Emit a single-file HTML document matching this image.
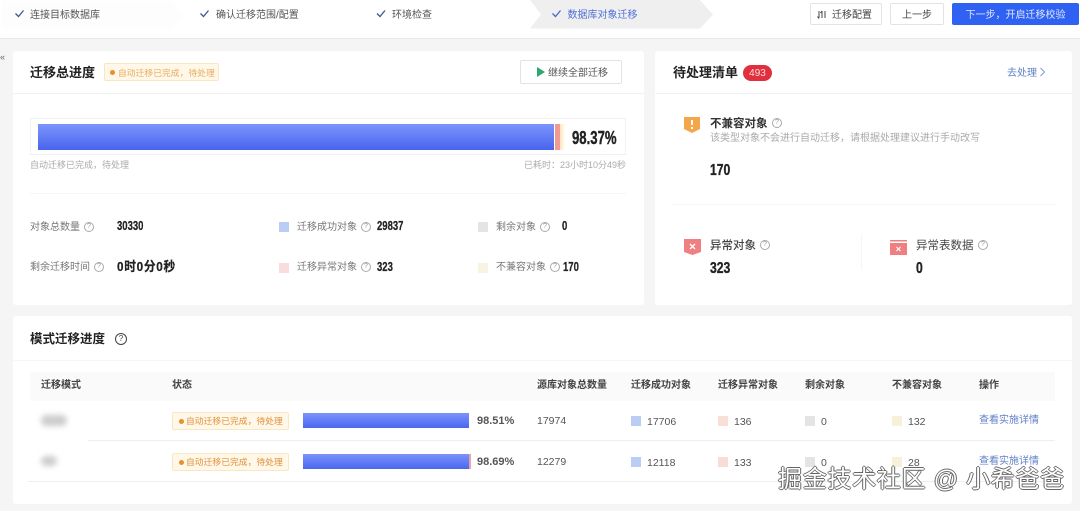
<!DOCTYPE html>
<html><head><meta charset="utf-8">
<style>
html,body{margin:0;padding:0}
body{width:1080px;height:511px;position:relative;overflow:hidden;background:#f5f5f5;font-family:"Liberation Sans","Noto Sans CJK SC",sans-serif;color:#333}
.a{position:absolute;white-space:nowrap}
.t{font-size:10px;line-height:14px;filter:blur(.3px);margin-top:1px}
.g{color:#777}
.n{font-family:"Liberation Sans Narrow","Liberation Sans","Noto Sans CJK SC",sans-serif;font-weight:700;color:#222;transform-origin:0 50%;transform:scaleX(.76);-webkit-text-stroke:.25px #222}
.card{position:absolute;background:#fff;border-radius:3px}
.h{font-weight:700;font-size:13px;line-height:18px;color:#222}
.sq{position:absolute;width:10px;height:10px}
.tag{position:absolute;left:172px;width:115px;height:16px;background:#fff7e8;border:1px solid #fbe6c4;border-radius:2px;color:#e0913a;font-size:8.800px;line-height:17px;white-space:nowrap;text-indent:13px;filter:blur(.25px)}
.tag:before{content:"";position:absolute;left:6px;top:5.500px;width:5px;height:5px;border-radius:50%;background:#e8902c}
.bar{position:absolute;left:303px;width:166px;height:15px;background:linear-gradient(#7b93fb,#4a66ee)}
.q{position:absolute;width:8px;height:8px;border:1px solid #aaa;border-radius:50%;color:#999;font-size:7px;line-height:8px;text-align:center;text-indent:0}
.btn{position:absolute;top:3px;height:22px;box-sizing:border-box;border:1px solid #e3e3e3;border-radius:2px;background:#fff;font-size:10px;line-height:23px;text-align:center;color:#444}
.ln{position:absolute;height:1px;background:#f1f1f1}
.th{font-size:10px;font-weight:700;color:#444;line-height:14px;margin-top:1px;filter:blur(.2px)}
.td{font-size:10.500px;color:#555;line-height:14px;margin-top:1px;filter:blur(.2px)}
.pc{font-size:11px;font-weight:700;line-height:14px;color:#555;margin-top:1px;filter:blur(.2px)}
</style></head><body>

<div class="a" style="left:0;top:0;width:1080px;height:38px;background:#fff;border-bottom:1px solid #e8e8e8"></div>
<svg class="a" style="left:0;top:0" width="720" height="30" viewBox="0 0 720 30">
<path d="M2 1H172L184 14.500 172 28H2Z" fill="#fdfdfd"/>
<path d="M530 0H700L713 14.500 700 28.500H530L541 14.500Z" fill="#efefef"/>
<g fill="none" stroke="#3f5596" stroke-width="1.300">
<path d="M15.500 13.500l3 3 5-6"/><path d="M200.500 13.500l3 3 5-6"/><path d="M377 13.500l3 3 5-6"/></g>
<path d="M552.500 13.500l3 3 5-6" fill="none" stroke="#4a68c8" stroke-width="1.300"/>
</svg>
<div class="a t" style="left:30px;top:8px;color:#555">连接目标数据库</div>
<div class="a t" style="left:216px;top:8px;color:#555">确认迁移范围/配置</div>
<div class="a t" style="left:392px;top:8px;color:#555">环境检查</div>
<div class="a t" style="left:567.500px;top:8px;color:#4f70d8">数据库对象迁移</div>

<div class="btn" style="left:810px;width:72px;text-indent:12px;filter:blur(.25px)">迁移配置</div>
<svg class="a" style="left:809px;top:9px" width="22" height="12"><path d="M10 2v7M8.500 7.500l1.500 2M13 2v7M13 2l-1.500 2M16 2v7" stroke="#555" stroke-width="1.100" fill="none"/></svg>
<div class="btn" style="left:890px;width:54px;filter:blur(.25px)">上一步</div>
<div class="btn" style="left:952px;width:127px;border:0;line-height:25px;background:#2f62f2;color:#dfe7ff;filter:blur(.25px)">下一步，开启迁移校验</div>

<div class="a" style="left:0;top:52px;font-size:9px;line-height:10px;color:#666">«</div>

<div class="card" style="left:13px;top:51px;width:631px;height:254px"></div>
<div class="card" style="left:655px;top:51px;width:417px;height:254px"></div>
<div class="card" style="left:13px;top:316px;width:1059px;height:188px"></div>

<div class="a h" style="left:30px;top:64px">迁移总进度</div>
<div class="a" style="left:104px;top:63px;width:115px;height:18px;box-sizing:border-box;background:#fff7e8;border:1px solid #fbe6c4;border-radius:2px;color:#e5ae62;font-size:8.800px;line-height:18px;text-indent:13px;filter:blur(.25px)">自动迁移已完成，待处理<i style="position:absolute;left:5px;top:6px;width:5px;height:5px;border-radius:50%;background:#e8902c"></i></div>
<div class="a" style="left:520px;top:60px;width:102px;height:24px;box-sizing:border-box;border:1px solid #e3e3e3;border-radius:2px;background:#fff;font-size:10px;line-height:25px;color:#555;text-indent:27px;filter:blur(.25px)">继续全部迁移</div>
<svg class="a" style="left:536px;top:67px" width="10" height="10"><path d="M1 0L9 5 1 10Z" fill="#2fa66d"/></svg>
<div class="ln" style="left:13px;top:93px;width:631px"></div>

<div class="a" style="left:30px;top:118px;width:596px;height:37px;box-sizing:border-box;border:1px solid #f1f1f1"></div>
<div class="a" style="left:37.500px;top:123.500px;width:516px;height:26px;background:linear-gradient(#7d95fb,#4864ee)"></div>
<div class="a" style="left:555px;top:123.500px;width:5px;height:26px;background:#f09a94"></div>
<div class="a" style="left:560px;top:123.500px;width:5px;height:26px;background:linear-gradient(90deg,#fde5b8,#fff)"></div>
<div class="a n" style="left:572px;top:128px;font-size:18px;line-height:20px;transform:scaleX(.73);-webkit-text-stroke:.4px #222">98.37%</div>
<div class="a t" style="left:30px;top:157px;font-size:9px;color:#aaa">自动迁移已完成，待处理</div>
<div class="a t" style="right:454px;top:157px;font-size:9px;color:#aaa">已耗时：23小时10分49秒</div>
<div class="ln" style="left:30px;top:193px;width:596px;background:#f5f5f5"></div>

<div class="a t g" style="left:30px;top:220px">对象总数量</div><div class="q" style="left:84px;top:222px">?</div>
<div class="a n" style="left:117px;top:219px;font-size:12.500px;line-height:15px">30330</div>
<div class="a t g" style="left:30px;top:260px">剩余迁移时间</div><div class="q" style="left:94px;top:262px">?</div>
<div class="a n" style="left:117px;top:258px;font-size:13px;line-height:17px;letter-spacing:.8px;transform:scaleX(.9)">0时0分0秒</div>

<div class="sq" style="left:278.500px;top:222px;background:#b9cdf5"></div>
<div class="a t g" style="left:297px;top:220px">迁移成功对象</div><div class="q" style="left:361px;top:222px">?</div>
<div class="a n" style="left:377px;top:219px;font-size:12.500px;line-height:15px">29837</div>
<div class="sq" style="left:278.500px;top:263px;background:#f9dcdc"></div>
<div class="a t g" style="left:297px;top:260px">迁移异常对象</div><div class="q" style="left:361px;top:262px">?</div>
<div class="a n" style="left:377px;top:260px;font-size:12.500px;line-height:15px">323</div>

<div class="sq" style="left:478px;top:222px;background:#e4e4e4"></div>
<div class="a t g" style="left:496px;top:220px">剩余对象</div><div class="q" style="left:540px;top:222px">?</div>
<div class="a n" style="left:562px;top:219px;font-size:12.500px;line-height:15px">0</div>
<div class="sq" style="left:478px;top:263px;background:#f8f4e4"></div>
<div class="a t g" style="left:496px;top:260px">不兼容对象</div><div class="q" style="left:550px;top:262px">?</div>
<div class="a n" style="left:563px;top:260px;font-size:12.500px;line-height:15px">170</div>

<div class="a h" style="left:673px;top:64px">待处理清单</div>
<div class="a" style="left:743px;top:65px;width:29px;height:16px;border-radius:8px;background:#e0303f;color:#ffd9dc;font-size:10px;line-height:17px;text-align:center">493</div>
<div class="a t" style="left:1007px;top:66px;color:#5f7fc0">去处理</div>
<svg class="a" style="left:1039px;top:67px" width="7" height="10"><path d="M1.500 1l4 4-4 4" fill="none" stroke="#7f99cc"/></svg>
<div class="ln" style="left:655px;top:93px;width:417px"></div>

<svg class="a" style="left:684px;top:116px" width="17" height="18"><path d="M0 1H16V13L8 17 0 13Z" fill="#f3a64a"/><path d="M8 4v5M8 11v2" stroke="#fff" stroke-width="2"/></svg>
<div class="a" style="left:710px;top:116px;font-size:11.500px;font-weight:700;line-height:16px;color:#333">不兼容对象</div><div class="q" style="left:772px;top:118px">?</div>
<div class="a t" style="left:710px;top:131px;color:#aaa">该类型对象不会进行自动迁移，请根据处理建议进行手动改写</div>
<div class="a n" style="left:710px;top:161px;font-size:16px;line-height:20px;-webkit-text-stroke:.35px #222">170</div>
<div class="ln" style="left:673px;top:204px;width:382px;background:#f7f7f7"></div>

<svg class="a" style="left:684px;top:239px" width="17" height="17"><path d="M0 0H17V13L8.500 16 0 13Z" fill="#f07f82"/><path d="M6 5l5 5M11 5l-5 5" stroke="#fff" stroke-width="1.300"/></svg>
<div class="a" style="left:710px;top:238px;font-size:11.500px;line-height:16px;color:#444;font-weight:500">异常对象</div><div class="q" style="left:760px;top:240px">?</div>
<div class="a n" style="left:710px;top:259px;font-size:16px;line-height:20px;-webkit-text-stroke:.35px #222">323</div>
<div class="a" style="left:861px;top:234px;width:1px;height:36px;background:#f6f6f6"></div>
<svg class="a" style="left:890px;top:240px" width="17" height="15"><path d="M0 0H17V1.500H0Z" fill="#f07f82"/><path d="M0 3H17V15H0Z" fill="#f07f82"/><path d="M6.500 7l4 4M10.500 7l-4 4" stroke="#fff" stroke-width="1.200"/></svg>
<div class="a" style="left:916px;top:238px;font-size:11.500px;line-height:16px;color:#444">异常表数据</div><div class="q" style="left:978px;top:240px">?</div>
<div class="a n" style="left:916px;top:259px;font-size:16px;line-height:20px;-webkit-text-stroke:.35px #222">0</div>

<div class="a h" style="left:30px;top:330px;font-size:12.500px">模式迁移进度</div>
<div class="a" style="left:115px;top:333px;width:10px;height:10px;border:1px solid #444;border-radius:50%;font-size:8px;line-height:10px;text-align:center;color:#444">?</div>
<div class="ln" style="left:13px;top:360px;width:1059px;background:#f6f6f6"></div>

<div class="a" style="left:30px;top:372px;width:1025px;height:29px;background:#fafafa"></div>
<div class="a th" style="left:41px;top:378px">迁移模式</div>
<div class="a th" style="left:172px;top:378px">状态</div>
<div class="a th" style="left:537px;top:378px">源库对象总数量</div>
<div class="a th" style="left:631px;top:378px">迁移成功对象</div>
<div class="a th" style="left:718px;top:378px">迁移异常对象</div>
<div class="a th" style="left:805px;top:378px">剩余对象</div>
<div class="a th" style="left:892px;top:378px">不兼容对象</div>
<div class="a th" style="left:979px;top:378px">操作</div>

<div class="a" style="left:41px;top:415px;width:26px;height:11px;background:#ccc;border-radius:5px;filter:blur(3px)"></div>
<div class="a" style="left:41px;top:456px;width:16px;height:10px;background:#ccc;border-radius:5px;filter:blur(3px)"></div>

<div class="tag" style="top:412px">自动迁移已完成，待处理</div>
<div class="bar" style="top:412.500px"></div>
<div class="a pc" style="left:477px;top:413px">98.51%</div>
<div class="td a" style="left:537px;top:412.500px">17974</div>
<div class="sq" style="left:631px;top:416px;background:#b9cdf5"></div><div class="td a" style="left:647px;top:414px">17706</div>
<div class="sq" style="left:718px;top:416px;background:#f8e0d8"></div><div class="td a" style="left:734px;top:414px">136</div>
<div class="sq" style="left:805px;top:416px;background:#e4e4e4"></div><div class="td a" style="left:821px;top:414px">0</div>
<div class="sq" style="left:892px;top:416px;background:#f8f1da"></div><div class="td a" style="left:908px;top:414px">132</div>
<div class="a t" style="left:979px;top:413px;color:#5f7fc8">查看实施详情</div>
<div class="ln" style="left:88px;top:440px;width:967px;background:#eee"></div>

<div class="tag" style="top:453px">自动迁移已完成，待处理</div>
<div class="bar" style="top:454px;width:166px;border-right:2px solid #e9a5a5"></div>
<div class="a pc" style="left:477px;top:454px">98.69%</div>
<div class="td a" style="left:537px;top:453.500px">12279</div>
<div class="sq" style="left:631px;top:457px;background:#b9cdf5"></div><div class="td a" style="left:647px;top:455px">12118</div>
<div class="sq" style="left:718px;top:457px;background:#f9dcd8"></div><div class="td a" style="left:734px;top:455px">133</div>
<div class="sq" style="left:805px;top:457px;background:#e4e4e4"></div><div class="td a" style="left:821px;top:455px">0</div>
<div class="sq" style="left:892px;top:457px;background:#f8f1da"></div><div class="td a" style="left:908px;top:455px">28</div>
<div class="a t" style="left:979px;top:454px;color:#5f7fc8">查看实施详情</div>
<div class="ln" style="left:28px;top:481px;width:1027px;background:#eee"></div>

<div class="a" style="left:778px;top:466px;font-size:24px;line-height:28px;letter-spacing:.7px;color:#fff;text-shadow:-1px 0 #666,1px 0 #666,0 -1px #666,0 1px #666;font-weight:400">掘金技术社区 @ 小希爸爸</div>
</body></html>
